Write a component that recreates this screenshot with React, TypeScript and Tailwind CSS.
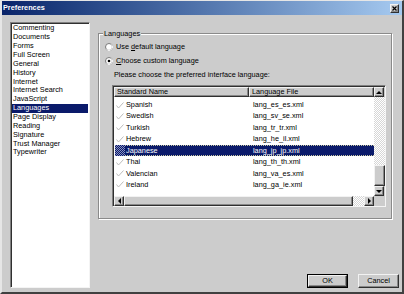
import React from "react"

const categories = [
  "Commenting",
  "Documents",
  "Forms",
  "Full Screen",
  "General",
  "History",
  "Internet",
  "Internet Search",
  "JavaScript",
  "Languages",
  "Page Display",
  "Reading",
  "Signature",
  "Trust Manager",
  "Typewriter",
]

const languages = [
  { name: "Spanish", file: "lang_es_es.xml" },
  { name: "Swedish", file: "lang_sv_se.xml" },
  { name: "Turkish", file: "lang_tr_tr.xml" },
  { name: "Hebrew", file: "lang_he_il.xml" },
  { name: "Japanese", file: "lang_jp_jp.xml", selected: true },
  { name: "Thai", file: "lang_th_th.xml" },
  { name: "Valencian", file: "lang_va_es.xml" },
  { name: "Ireland", file: "lang_ga_ie.xml" },
]

const raised =
  "bg-[#cccccc] border border-t-[#f2f2f2] border-l-[#f2f2f2] border-b-[#303030] border-r-[#303030] shadow-[inset_-1px_-1px_0_#888888]"

const Arrow = ({ dir }: { dir: "up" | "down" | "left" | "right" }) => {
  const pts = {
    up: "1,4 4,1 7,4",
    down: "1,1 4,4 7,1",
    left: "4,0 1,3 4,6",
    right: "1,0 4,3 1,6",
  }[dir]
  const vertical = dir === "up" || dir === "down"
  return (
    <svg width={vertical ? 8 : 5} height={vertical ? 5 : 7} viewBox={vertical ? "0 0 8 5" : "0 0 5 7"}>
      <polygon points={pts} fill="#000" />
    </svg>
  )
}

const ScrollBtn = ({ dir }: { dir: "up" | "down" | "left" | "right" }) => (
  <div className={`w-[10px] h-[10px] flex items-center justify-center ${raised}`}>
    <Arrow dir={dir} />
  </div>
)

const Radio = ({ checked }: { checked?: boolean }) => (
  <svg width="8" height="8" viewBox="0 0 8 8" className="shrink-0">
    <circle cx="4" cy="4" r="3.5" fill="#fff" stroke="#7a7a7a" />
    <path d="M6.5 1.5 A3.5 3.5 0 0 1 1.5 6.5" fill="none" stroke="#f0f0f0" />
    {checked && <circle cx="4" cy="4" r="1.3" fill="#000" />}
  </svg>
)

const Check = () => (
  <svg width="8" height="7" viewBox="0 0 8 7">
    <polyline points="0.5,3.5 2.5,6 7.5,0.5" fill="none" stroke="#b4b4b4" strokeWidth="0.9" />
  </svg>
)

export default function App() {
  return (
    <div className="w-[404px] h-[294px] flex flex-col bg-[#cccccc] border-t border-l-2 border-r-2 border-b-2 border-t-[#e6e6e6] border-l-[#e6e6e6] border-r-[#404040] border-b-[#404040] font-['Liberation_Sans',Arial,sans-serif] text-[7.3px] leading-[8px] text-black">
      {/* Title bar */}
      <div className="h-[14px] flex items-center justify-between bg-gradient-to-r from-[#0a246a] to-[#a6caf0] pl-[1px] pr-[3px]">
        <span className="text-white font-bold">Preferences</span>
        <div className={`w-[9px] h-[9px] flex items-center justify-center ${raised}`}>
          <svg width="5" height="5" viewBox="0 0 5 5">
            <path d="M0.5 0.5 L4.5 4.5 M4.5 0.5 L0.5 4.5" stroke="#000" strokeWidth="1.2" />
          </svg>
        </div>
      </div>

      <div className="flex-1 flex pt-[7px] pl-[8px] pr-[3px] pb-[4px]">
        {/* Category list */}
        <div className="w-[80px] bg-white border border-t-[#808080] border-l-[#808080] border-b-[#f4f4f4] border-r-[#f4f4f4] shadow-[inset_1px_1px_0_#303030] pt-[1px] pl-[1px] pr-[1px]">
          {categories.map((c) => (
            <div
              key={c}
              className={`h-[8.86px] flex items-center pl-[1px] ${
                c === "Languages" ? "bg-[#0a1a6a] text-white" : ""
              }`}
            >
              {c}
            </div>
          ))}
        </div>

        {/* Right side */}
        <div className="flex-1 flex flex-col ml-[8px]">
          <div className="relative mt-[11px] mr-[7px] h-[186px] border border-[#8a8a8a] shadow-[inset_1px_1px_0_#fff,1px_1px_0_#fff] pt-[6px] pl-[6px]">
            <span className="absolute -top-[4px] left-[4px] bg-[#cccccc] px-[1px]">Languages</span>

            <div className="h-[14px] flex items-center gap-[3px]">
              <Radio />
              <span>
                Use <u>d</u>efault language
              </span>
            </div>
            <div className="h-[14px] flex items-center gap-[3px]">
              <Radio checked />
              <span>
                <u>C</u>hoose custom language
              </span>
            </div>
            <div className="h-[14px] flex items-center pl-[9px]">
              Please choose the preferred interface language:
            </div>

            {/* Language table */}
            <div className="ml-[7px] mt-[3px] w-[274px] h-[122px] border border-t-[#808080] border-l-[#808080] border-b-[#f4f4f4] border-r-[#f4f4f4] shadow-[inset_1px_1px_0_#303030] pt-[1px] pl-[1px] flex flex-col">
              <div className="flex flex-1">
                <div className="flex-1 bg-white flex flex-col">
                  <div className="h-[10px] flex">
                    <div className={`w-[135px] flex items-center pl-[2px] ${raised}`}>Standard Name</div>
                    <div className={`flex-1 flex items-center pl-[2px] ${raised}`}>Language File</div>
                  </div>
                  <div className="pt-[2.3px] pl-[1px]">
                    {languages.map((l) => (
                      <div key={l.name} className="h-[11.43px] flex items-center">
                        <div
                          className={`w-[10px] h-[11px] flex items-center justify-center ${
                            l.selected
                              ? "bg-[repeating-conic-gradient(#0a1a6a_0_25%,#8890c0_0_50%)] bg-[length:2px_2px]"
                              : ""
                          }`}
                        >
                          {!l.selected && <Check />}
                        </div>
                        <div
                          className={`flex-1 h-full flex items-center ${
                            l.selected
                              ? "bg-[#0a1a6a] text-white border-y border-dotted border-y-[#c8c8a0]"
                              : ""
                          }`}
                        >
                          <span className="w-[125px] pl-[1px]">{l.name}</span>
                          <span className="pl-[3px]">{l.file}</span>
                        </div>
                      </div>
                    ))}
                  </div>
                </div>
                {/* Vertical scrollbar */}
                <div className="w-[11px] flex flex-col">
                  <ScrollBtn dir="up" />
                  <div className="flex-1 bg-[repeating-conic-gradient(#ffffff_0_25%,#d6d6d6_0_50%)] bg-[length:2px_2px]" />
                  <div className={`h-[21px] ${raised}`} />
                  <ScrollBtn dir="down" />
                </div>
              </div>
              {/* Horizontal scrollbar */}
              <div className="h-[10px] flex">
                <ScrollBtn dir="left" />
                <div className={`w-[229px] ${raised}`} />
                <div className="flex-1 bg-[repeating-conic-gradient(#ffffff_0_25%,#d6d6d6_0_50%)] bg-[length:2px_2px]" />
                <ScrollBtn dir="right" />
                <div className="w-[11px] bg-[#cccccc]" />
              </div>
            </div>
          </div>

          <div className="flex-1" />

          <div className="flex justify-end gap-[10px]">
            <button className="w-[41px] h-[14px] border border-black bg-[#cccccc] p-0">
              <div className={`w-full h-full flex items-center justify-center ${raised}`}>OK</div>
            </button>
            <button className={`w-[41px] h-[14px] flex items-center justify-center ${raised}`}>Cancel</button>
          </div>
        </div>
      </div>
    </div>
  )
}
